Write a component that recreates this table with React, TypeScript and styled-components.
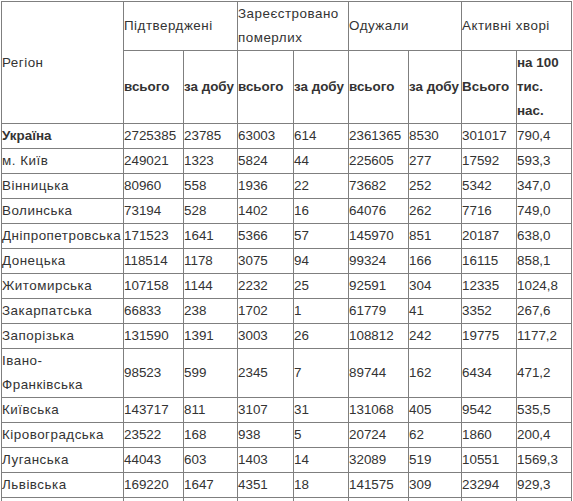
import React from "react";
import styled, { createGlobalStyle } from "styled-components";

const Global = createGlobalStyle`
  html, body { margin: 0; padding: 0; background: #ffffff; }
  body { font-family: "Liberation Sans", Arial, sans-serif; }
`;

const Page = styled.div`
  padding: 1px 0 0 1px;
`;

const Table = styled.table`
  border-collapse: collapse;
  table-layout: fixed;
  width: 570px;
  font-family: "Liberation Sans", Arial, sans-serif;
  font-size: 13.4px;
  line-height: 24px;
  color: #333333;
`;

const Col = styled.col<{ $w: number }>`
  width: ${(p) => p.$w}px;
`;

const Cell = styled.td<{ $bold?: boolean; $text?: boolean }>`
  border: 1px solid #7f7f7f;
  padding: 0;
  vertical-align: middle;
  text-align: left;
  font-weight: ${(p) => (p.$bold ? 700 : 400)};
  letter-spacing: ${(p) => (p.$text && !p.$bold ? "0.5px" : "0")};
`;

const HeadCell = styled.th<{ $bold?: boolean }>`
  border: 1px solid #7f7f7f;
  padding: 0;
  vertical-align: middle;
  text-align: left;
  font-weight: ${(p) => (p.$bold ? 700 : 400)};
  letter-spacing: ${(p) => (p.$bold ? "0" : "0.5px")};
`;

const widths = [122, 60, 54, 56, 55, 60, 53, 55, 55];

const rows: string[][] = [
  ["Україна", "2725385", "23785", "63003", "614", "2361365", "8530", "301017", "790,4"],
  ["м. Київ", "249021", "1323", "5824", "44", "225605", "277", "17592", "593,3"],
  ["Вінницька", "80960", "558", "1936", "22", "73682", "252", "5342", "347,0"],
  ["Волинська", "73194", "528", "1402", "16", "64076", "262", "7716", "749,0"],
  ["Дніпропетровська", "171523", "1641", "5366", "57", "145970", "851", "20187", "638,0"],
  ["Донецька", "118514", "1178", "3075", "94", "99324", "166", "16115", "858,1"],
  ["Житомирська", "107158", "1144", "2232", "25", "92591", "304", "12335", "1024,8"],
  ["Закарпатська", "66833", "238", "1702", "1", "61779", "41", "3352", "267,6"],
  ["Запорізька", "131590", "1391", "3003", "26", "108812", "242", "19775", "1177,2"],
  ["Івано-Франківська", "98523", "599", "2345", "7", "89744", "162", "6434", "471,2"],
  ["Київська", "143717", "811", "3107", "31", "131068", "405", "9542", "535,5"],
  ["Кіровоградська", "23522", "168", "938", "5", "20724", "62", "1860", "200,4"],
  ["Луганська", "44043", "603", "1403", "14", "32089", "519", "10551", "1569,3"],
  ["Львівська", "169220", "1647", "4351", "18", "141575", "309", "23294", "929,3"],
  ["Миколаївська", "64529", "532", "1680", "12", "57236", "119", "5613", "497,2"],
];

const subHeads = ["всього", "за добу", "всього", "за добу", "всього", "за добу", "Всього", "на 100 тис. нас."];

export default function App() {
  return (
    <>
      <Global />
      <Page>
        <Table>
          <colgroup>
            {widths.map((w, i) => (
              <Col key={i} $w={w} />
            ))}
          </colgroup>
          <thead>
            <tr>
              <HeadCell rowSpan={2}>Регіон</HeadCell>
              <HeadCell colSpan={2}>Підтверджені</HeadCell>
              <HeadCell colSpan={2}>Зареєстровано померлих</HeadCell>
              <HeadCell colSpan={2}>Одужали</HeadCell>
              <HeadCell colSpan={2}>Активні хворі</HeadCell>
            </tr>
            <tr>
              {subHeads.map((h, i) => (
                <HeadCell key={i} $bold>
                  {h}
                </HeadCell>
              ))}
            </tr>
          </thead>
          <tbody>
            {rows.map((r, i) => (
              <tr key={r[0]}>
                {r.map((v, j) => (
                  <Cell key={j} $bold={i === 0 && j === 0} $text={j === 0}>
                    {v}
                  </Cell>
                ))}
              </tr>
            ))}
          </tbody>
        </Table>
      </Page>
    </>
  );
}
